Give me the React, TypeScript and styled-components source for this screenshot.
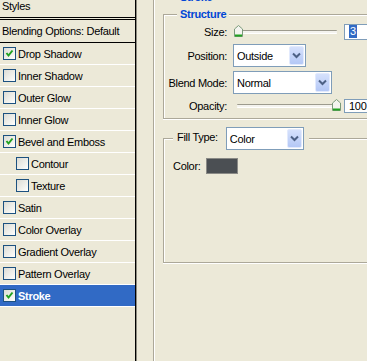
import React from 'react';
import styled, { createGlobalStyle } from 'styled-components';

const GlobalStyle = createGlobalStyle`
  html, body {
    margin: 0;
    padding: 0;
    background: #ece9d8;
  }
  body {
    width: 367px;
    height: 361px;
    overflow: hidden;
    font-family: "Liberation Sans", Arial, sans-serif;
    font-size: 11px;
    letter-spacing: -0.3px;
    color: #000;
  }
`;

type StyleItem = { name: string; checked?: boolean; indent?: boolean; selected?: boolean };

const styleItems: StyleItem[] = [
  { name: 'Drop Shadow', checked: true },
  { name: 'Inner Shadow' },
  { name: 'Outer Glow' },
  { name: 'Inner Glow' },
  { name: 'Bevel and Emboss', checked: true },
  { name: 'Contour', indent: true },
  { name: 'Texture', indent: true },
  { name: 'Satin' },
  { name: 'Color Overlay' },
  { name: 'Gradient Overlay' },
  { name: 'Pattern Overlay' },
  { name: 'Stroke', checked: true, selected: true },
];

const Dialog = styled.div`
  display: flex;
  width: 367px;
  height: 361px;
  overflow: hidden;
  background: #ece9d8;
`;

const StyleList = styled.div`
  flex: none;
  width: 135px;
  border-right: 1px solid #000;
  box-shadow: 1px 0 0 #8d8b80;
  display: flex;
  flex-direction: column;
`;

const ListHeader = styled.div`
  height: 17px;
  line-height: 13px;
  padding-left: 2px;
  border-bottom: 3px double #000;
`;

const BlendRow = styled.div`
  height: 22px;
  line-height: 22px;
  padding-left: 2px;
  border-bottom: 1px solid #000;
`;

const StyleRow = styled.div<{ $indent?: boolean; $selected?: boolean }>`
  height: 21px;
  display: flex;
  align-items: center;
  gap: 2px;
  padding-left: ${p => (p.$indent ? 16 : 3)}px;
  border-bottom: 1px solid #fff;
  background: ${p => (p.$selected ? '#316ac5' : 'transparent')};
  color: ${p => (p.$selected ? '#fff' : '#000')};
  font-weight: ${p => (p.$selected ? 700 : 400)};
`;

const Box = styled.span`
  flex: none;
  width: 13px;
  height: 13px;
  box-sizing: border-box;
  border: 1px solid #1c5180;
  background: linear-gradient(135deg, #dcdcd5 0%, #f4f4f0 70%, #fff 100%);
  display: flex;
  align-items: center;
  justify-content: center;
`;

const Options = styled.div`
  flex: 1;
  min-width: 0;
  overflow: hidden;
  padding-left: 17px;
`;

const GroupBox = styled.fieldset<{ $width: number; $pad: number; $gapTop?: number }>`
  margin: ${p => p.$gapTop ?? 0}px 0 0 0;
  padding: 0 0 ${p => p.$pad}px 0;
  min-width: 0;
  width: ${p => p.$width}px;
  border: 1px solid #aca899;
  border-right: none;
  box-shadow: inset 1px 1px 0 #fff, 0 1px 0 #fff;
`;

const OuterBox = styled(GroupBox)`
  margin-top: -9px;
  padding-left: 9px;
`;

const Caption = styled.legend<{ $offset: number }>`
  margin-left: ${p => p.$offset}px;
  padding: 0 3px;
  background: #ece9d8;
  color: #0046d5;
  font-weight: 700;
  line-height: 13px;
`;

const FillCaption = styled.legend`
  margin: 0 0 -7px 9px;
  padding: 0 5px 0 4px;
  background: #ece9d8;
  display: flex;
  align-items: center;
  gap: 8px;
`;

const FillLabel = styled.span`
  margin-top: -3px;
`;

const FormGrid = styled.div`
  display: grid;
  grid-template-columns: 63px auto;
  grid-template-rows: 17px 23px 23px 15px;
  row-gap: 4px;
  column-gap: 6px;
  align-items: center;
  margin-top: 2px;
`;

const Label = styled.span`
  text-align: right;
`;

const SliderRow = styled.div`
  display: flex;
  align-items: center;
  gap: 3px;
`;

const Slider = styled.div`
  position: relative;
  width: 108px;
  height: 13px;
  display: flex;
  align-items: center;
`;

const Track = styled.div`
  margin-left: 4px;
  width: 100px;
  height: 2px;
  border-top: 1px solid #9d9b8e;
  border-bottom: 1px solid #fff;
  background: #f4f3ee;
  border-radius: 1px;
`;

const Thumb = styled.svg`
  position: absolute;
  top: 0;
`;

const NumBox = styled.div<{ $h: number }>`
  width: 40px;
  height: ${p => p.$h}px;
  box-sizing: border-box;
  border: 1px solid #7f9db9;
  background: #fff;
  padding-left: 4px;
  display: flex;
  align-items: center;
`;

const Highlight = styled.span`
  background: #316ac5;
  color: #fff;
  padding: 0 1px;
  line-height: 13px;
`;

const Select = styled.div<{ $width: number }>`
  width: ${p => p.$width}px;
  height: 23px;
  box-sizing: border-box;
  border: 1px solid #7f9db9;
  background: #fff;
  display: flex;
  align-items: center;
  justify-content: space-between;
  padding: 1px 1px 1px 3px;
  font-weight: 400;
  color: #000;
`;

const SelectButton = styled.span`
  width: 15px;
  height: 100%;
  box-sizing: border-box;
  border: 1px solid #e2eafd;
  border-radius: 2px;
  background: linear-gradient(#d6e1fc, #b4c8f6);
  display: flex;
  align-items: center;
  justify-content: center;
`;

const ColorRow = styled.div`
  display: flex;
  align-items: center;
  gap: 5px;
  margin: 15px 0 0 9px;
`;

const Swatch = styled.span`
  width: 32px;
  height: 16px;
  box-sizing: border-box;
  border: 1px solid #8a8a86;
  background: #4b4f53;
`;

const Check = () => (
  <svg width="9" height="9" viewBox="0 0 9 9">
    <polyline points="1.5,4 3.5,6.5 7.5,1.5" fill="none" stroke="#21a121" strokeWidth="2" />
  </svg>
);

const Chevron = () => (
  <svg width="9" height="7" viewBox="0 0 9 7">
    <polyline points="1,1.5 4.5,5 8,1.5" fill="none" stroke="#4d6185" strokeWidth="2" />
  </svg>
);

const ThumbShape = ({ left }: { left: number }) => (
  <Thumb width="9" height="12" viewBox="0 0 9 12" style={{ left }}>
    <polygon points="0.5,4 4.5,0.5 8.5,4 8.5,11.5 0.5,11.5" fill="#f4f4ef" stroke="#7b9a7b" />
    <rect x="1" y="9.5" width="7" height="2" fill="#21a121" />
  </Thumb>
);

const Dropdown = ({ value, width }: { value: string; width: number }) => (
  <Select $width={width}>
    <span>{value}</span>
    <SelectButton>
      <Chevron />
    </SelectButton>
  </Select>
);

const App: React.FC = () => (
  <Dialog>
    <GlobalStyle />
    <StyleList>
      <ListHeader>Styles</ListHeader>
      <BlendRow>Blending Options: Default</BlendRow>
      {styleItems.map(item => (
        <StyleRow key={item.name} $indent={item.indent} $selected={item.selected}>
          <Box>{item.checked && <Check />}</Box>
          <span>{item.name}</span>
        </StyleRow>
      ))}
    </StyleList>

    <Options>
      <OuterBox $width={300} $pad={200}>
        <Caption $offset={14}>Stroke</Caption>
        <GroupBox $width={260} $pad={5} $gapTop={4}>
          <Caption $offset={13}>Structure</Caption>
          <FormGrid>
            <Label>Size:</Label>
            <SliderRow>
              <Slider>
                <Track />
                <ThumbShape left={1} />
              </Slider>
              <NumBox $h={16}>
                <Highlight>3</Highlight>
              </NumBox>
            </SliderRow>
            <Label>Position:</Label>
            <Dropdown value="Outside" width={73} />
            <Label>Blend Mode:</Label>
            <Dropdown value="Normal" width={99} />
            <Label>Opacity:</Label>
            <SliderRow>
              <Slider>
                <Track />
                <ThumbShape left={99} />
              </Slider>
              <NumBox $h={14}>100</NumBox>
            </SliderRow>
          </FormGrid>
        </GroupBox>
        <GroupBox $width={260} $pad={88} $gapTop={8}>
          <FillCaption>
            <FillLabel>Fill Type:</FillLabel>
            <Dropdown value="Color" width={78} />
          </FillCaption>
          <ColorRow>
            <span>Color:</span>
            <Swatch />
          </ColorRow>
        </GroupBox>
      </OuterBox>
    </Options>
  </Dialog>
);

export default App;
